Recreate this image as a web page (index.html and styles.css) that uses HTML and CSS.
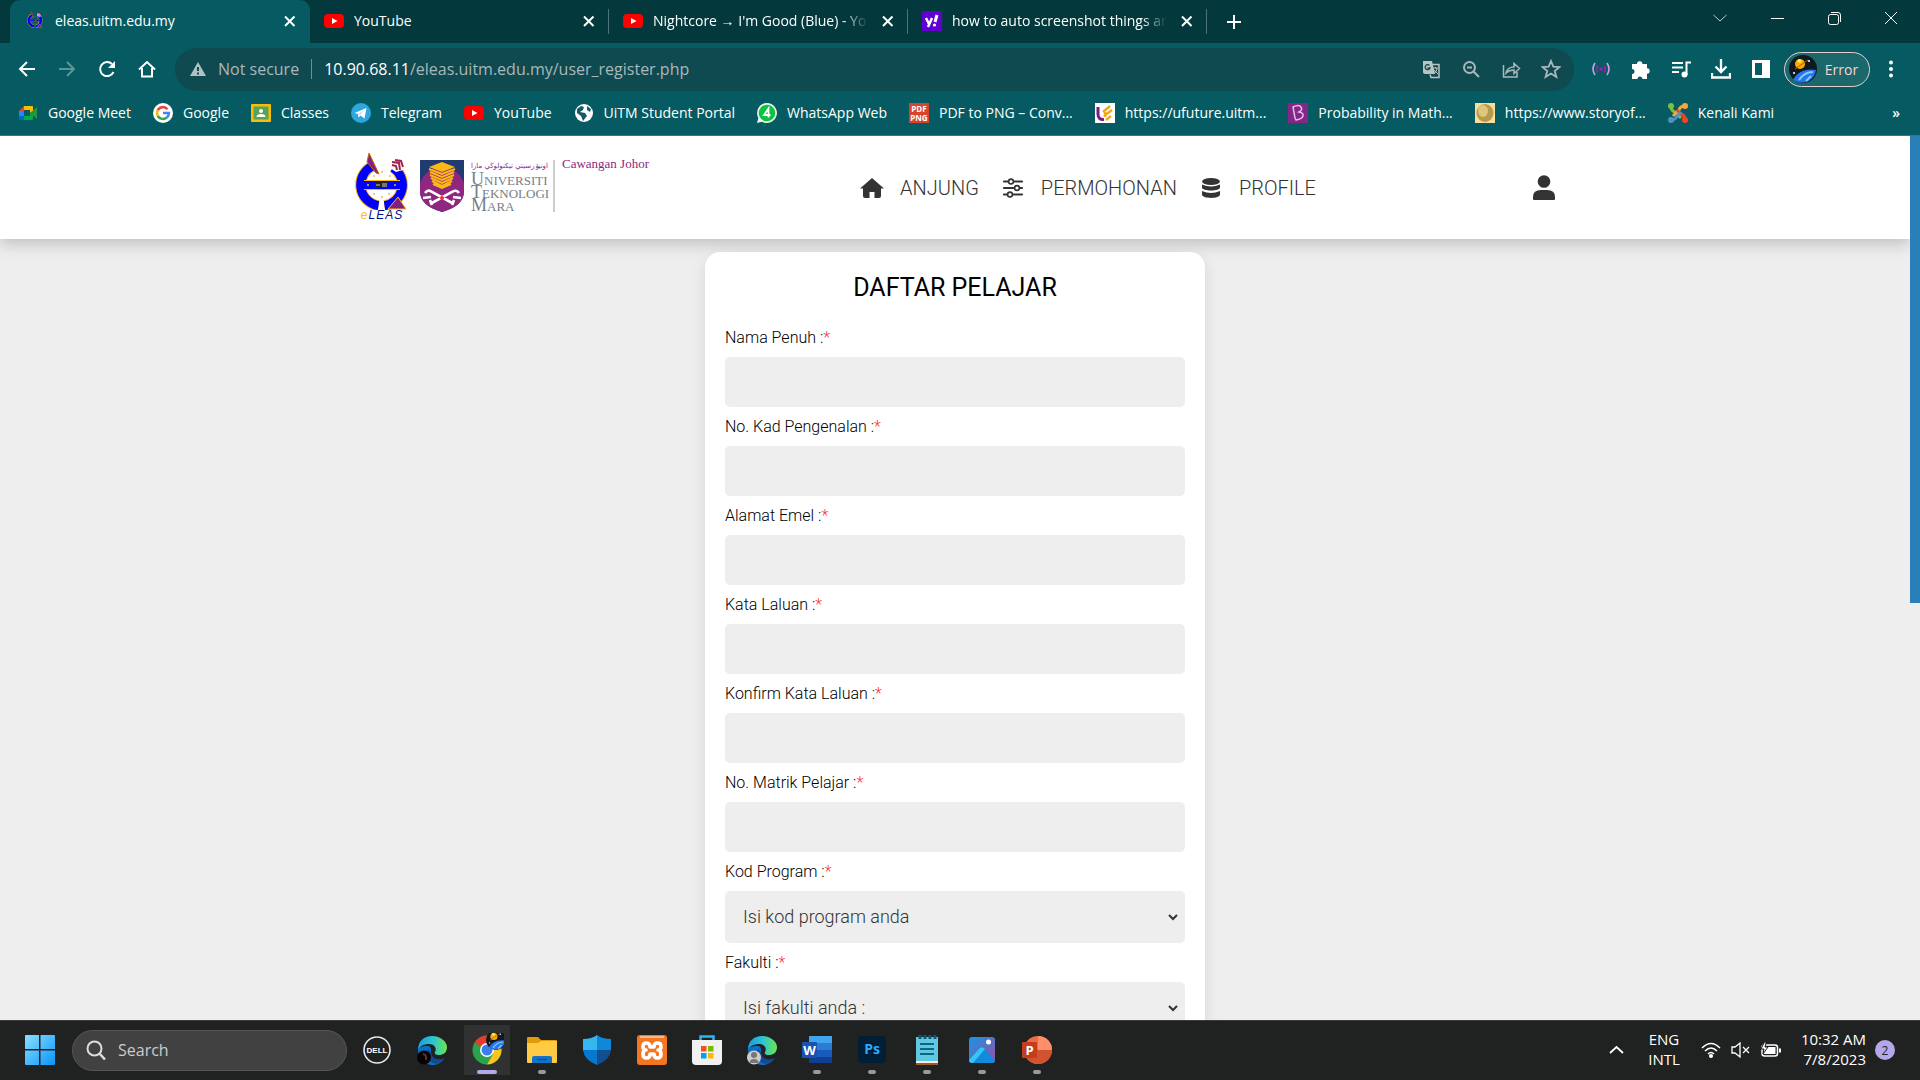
FILE: index.html
```html
<!DOCTYPE html>
<html lang="ms">
<head>
<meta charset="utf-8">
<title>eleas.uitm.edu.my</title>
<link rel="stylesheet" href="styles.css">
</head>
<body>
<svg class="defs" width="0" height="0" aria-hidden="true">
  <defs>
    <symbol id="i-close" viewBox="0 0 20 20"><path d="M5 5.500l9.500 9.500M14.500 5.500L5 15" stroke="currentColor" stroke-width="2" fill="none"/></symbol>
    <symbol id="i-yt" viewBox="0 0 20 20"><rect y="3" width="20" height="14" rx="4" fill="#f00"/><path d="M8 7l5.500 3L8 13z" fill="#fff"/></symbol>
    <symbol id="i-eleas" viewBox="0 0 54 70">
      <g fill="none" stroke="#fb1" stroke-width="11"><path d="M19 13.400A21 21 0 0 0 23.500 53.700"/><path d="M29.500 53.700A21 21 0 0 0 38 15.400"/></g>
      <g fill="none" stroke="#00f" stroke-width="9"><path d="M19 13.400A21 21 0 0 0 23.500 53.700"/><path d="M29.500 53.700A21 21 0 0 0 38 15.400"/></g>
      <rect x="9" y="28" width="36" height="10" fill="#fb1"/><rect x="6" y="29" width="42" height="8" fill="#00f"/>
      <rect x="20" y="30" width="13" height="6" fill="#222"/><path d="M21 33h4M27 32h5M27 34h5" stroke="#ccc"/>
      <circle cx="13" cy="33" r="1" fill="#fb1"/><circle cx="40" cy="33" r="1" fill="#fb1"/>
      <path d="M14 1l10 21-3-1L12 10z" fill="#802080" stroke="#c60"/><path d="M35 9l9-1 4 10-7 2-6-4z" fill="#fff"/>
      <path d="M37 10l7 1 1 7M37 13l4 1 1 4M40 8l6 1 2 6" fill="none" stroke="#a02050" stroke-width="2"/>
      <path d="M33 57l10-12 8 12z" fill="#802080" stroke="#fb1"/>
      <g fill="#db6"><circle cx="19" cy="24" r="1"/><circle cx="27" cy="20" r="1"/><circle cx="35" cy="24" r="1"/><circle cx="19" cy="42" r="1"/><circle cx="27" cy="45" r="1"/><circle cx="34" cy="42" r="1"/></g>
    </symbol>
    <symbol id="i-space" viewBox="0 0 28 28"><circle cx="14" cy="14" r="14" fill="#101820"/><path d="M4 25C8 17 17 13 27 15A14 14 0 0 1 9 27z" fill="#2277ee"/><path d="M10 25c4-6 8-8 14-8M17 26l5-5" stroke="#8cc4ff" stroke-width="2" fill="none"/><circle cx="11" cy="9" r="5" fill="#fa0"/><path d="M6 14l13-9" stroke="#a60"/><path d="M9 5l3 2" stroke="#fe5" stroke-width="3"/><circle cx="20" cy="6" r="1" fill="#fff"/><circle cx="5" cy="18" r="1" fill="#fff"/></symbol>
    <linearGradient id="g-edge" x1="0" y1="0" x2="1" y2="0"><stop offset="0" stop-color="#1b9de2"/><stop offset=".5" stop-color="#2cc3d4"/><stop offset="1" stop-color="#6be64c"/></linearGradient>
    <linearGradient id="g-win" x1="0" y1="0" x2="1" y2="1"><stop offset="0" stop-color="#8be0ff"/><stop offset="1" stop-color="#0a94fb"/></linearGradient>
    <linearGradient id="g-photo" x1="0" y1="0" x2="1" y2="1"><stop offset="0" stop-color="#1595e8"/><stop offset="1" stop-color="#9a4ea5"/></linearGradient>
    <symbol id="i-edge" viewBox="0 0 30 30">
      <path d="M1 15A14 14 0 0 0 15 30c5 0 9-2 12-6-7 3-14-1-13-8 0-3 0-5-4-5C5 11 1 13 1 15z" fill="#0c70c6"/>
      <path d="M11 14c-3 5 0 14 8 15 4-1 7-3 9-6-8 3-14 0-14-6z" fill="#114a93"/>
      <path d="M1 15C1 6 7 1 15 1c9 0 15 6 15 11 0 6-4 8-8 8-3 0-5-1-4-3 2-3 0-8-6-8-5 0-9 2-11 6z" fill="url(#g-edge)"/>
    </symbol>
  </defs>
</svg>

<header class="browser">
  <div class="tabstrip">
    <nav class="tabs" aria-label="Tabs">
      <div class="tab tab-active"><svg class="ic20"><use href="#i-eleas"/></svg><span class="tab-title">eleas.uitm.edu.my</span><button class="tab-close" aria-label="Close tab"><svg class="ic20"><use href="#i-close"/></svg></button></div>
      <div class="tab"><svg class="ic20"><use href="#i-yt"/></svg><span class="tab-title">YouTube</span><button class="tab-close" aria-label="Close tab"><svg class="ic20"><use href="#i-close"/></svg></button></div>
      <div class="tab"><svg class="ic20"><use href="#i-yt"/></svg><span class="tab-title tab-fade">Nightcore → I'm Good (Blue) - Yo</span><button class="tab-close" aria-label="Close tab"><svg class="ic20"><use href="#i-close"/></svg></button></div>
      <div class="tab"><svg class="ic20" viewBox="0 0 20 20"><rect width="20" height="20" fill="#6001d2"/><path d="M4 7l3 6M10 7l-4 9" stroke="#fff" stroke-width="2.500"/><path d="M15 4l-2 7" stroke="#fff" stroke-width="3"/><circle cx="12.500" cy="14" r="1.600" fill="#fff"/></svg><span class="tab-title tab-fade">how to auto screenshot things an</span><button class="tab-close" aria-label="Close tab"><svg class="ic20"><use href="#i-close"/></svg></button></div>
      <button class="newtab" aria-label="New tab"><svg class="ic20" viewBox="0 0 20 20"><path d="M10 3v14M3 10h14" stroke="currentColor" stroke-width="2"/></svg></button>
    </nav>
    <div class="winctl">
      <button aria-label="Search tabs"><svg class="ic20" viewBox="0 0 20 20"><path d="M3.500 7l6.500 6 6.500-6" fill="none" stroke="#b6cdcf"/></svg></button>
      <button aria-label="Minimize"><svg class="ic20" viewBox="0 0 20 20"><path d="M4 10.500h13" stroke="#fff"/></svg></button>
      <button aria-label="Restore"><svg class="ic20" viewBox="0 0 20 20"><rect x="4.500" y="6.500" width="10" height="10" rx="2" fill="none" stroke="#fff"/><path d="M7 4.500h7q2.500 0 2.500 2.500v7" fill="none" stroke="#fff"/></svg></button>
      <button aria-label="Close"><svg class="ic20" viewBox="0 0 20 20"><path d="M4 4l12 12M16 4L4 16" stroke="#fff"/></svg></button>
    </div>
  </div>

  <div class="toolbar">
    <div class="navbtns">
      <button aria-label="Back"><svg class="ic20" viewBox="0 0 20 20"><path d="M18 10H3M10 3l-7 7 7 7" fill="none" stroke="currentColor" stroke-width="2"/></svg></button>
      <button aria-label="Forward" class="dim"><svg class="ic20" viewBox="0 0 20 20"><path d="M2 10h15M10 3l7 7-7 7" fill="none" stroke="currentColor" stroke-width="2"/></svg></button>
      <button aria-label="Reload"><svg class="ic20" viewBox="0 0 20 20"><path d="M16.500 13A7 7 0 1 1 15 5" fill="none" stroke="currentColor" stroke-width="2"/><path d="M18 2v7h-7z" fill="currentColor"/></svg></button>
      <button aria-label="Home"><svg class="ic20" viewBox="0 0 20 20"><path d="M2 10.500L10 3l8 7.500M5 9v8.500h10V9" fill="none" stroke="currentColor" stroke-width="2"/></svg></button>
    </div>
    <div class="omnibox">
      <svg class="ic16" viewBox="0 0 16 16"><path d="M8 1l8 14H0z" fill="#b3c0c2"/><path d="M8 6v4M8 11.500v2" stroke="#0f4a50" stroke-width="2"/></svg>
      <span class="notsecure">Not secure</span><span class="omni-sep"></span>
      <label class="host" for="url">10.90.68.11</label><input id="url" class="url" value="/eleas.uitm.edu.my/user_register.php">
      <div class="omni-actions">
        <button aria-label="Translate"><svg class="ic20" viewBox="0 0 20 20"><path d="M2 2h9l3 13H4q-2 0-2-2z" fill="#b9c3c4"/><path d="M10 5.500h8v13h-8l-1-3" fill="none" stroke="#b9c3c4" stroke-width="1.500"/><path d="M12 9h5M14.500 8v1M16 9c0 3-2 5-4 6M13 11l4 4" stroke="#b9c3c4" fill="none"/><path d="M8.500 6.500A2.500 2.500 0 1 0 9 9H6.500" fill="none" stroke="#0f4a50" stroke-width="1.300"/></svg></button>
        <button aria-label="Zoom"><svg class="ic20" viewBox="0 0 20 20"><circle cx="8.500" cy="8.500" r="5.500" fill="none" stroke="currentColor" stroke-width="2"/><path d="M12.500 12.500L18 18M6 8.500h5" stroke="currentColor" stroke-width="2"/></svg></button>
        <button aria-label="Share"><svg class="ic20" viewBox="0 0 20 20"><path d="M2.500 6v12H16v-5M5 14c1-4 4-6 8-6V4.500l5.500 5-5.500 5V11c-4 0-6 1-8 3z" fill="none" stroke="currentColor" stroke-width="1.500"/></svg></button>
        <button aria-label="Bookmark"><svg class="ic20" viewBox="0 0 20 20"><path d="M10 2l2.300 5.700 6.200.3-4.800 4 1.700 6-5.400-3.400L4.600 18l1.700-6-4.800-4 6.200-.3z" fill="none" stroke="currentColor" stroke-width="1.800"/></svg></button>
      </div>
    </div>
    <div class="extbtns">
      <button aria-label="Recorder"><svg class="ic20" viewBox="0 0 20 20" fill="none" stroke="#c9a3d9" stroke-width="1.600"><circle cx="10" cy="10" r="1.800" fill="#a21caf" stroke="none"/><path d="M7 6.500q-2.500 3.500 0 7M13 6.500q2.500 3.500 0 7" stroke="#a21caf"/><path d="M4 4q-4 6 0 12M16 4q4 6 0 12"/></svg></button>
      <button aria-label="Extensions"><svg class="ic20" viewBox="0 0 20 20"><path d="M1 5h5a2.700 2.700 0 1 1 5.400 0H16v4.300a2.700 2.700 0 1 1 0 5.400V20h-4.500a2.500 2.500 0 0 0-5 0H1v-5a2.500 2.500 0 0 0 0-5z" fill="#fff"/></svg></button>
      <button aria-label="Media"><svg class="ic20" viewBox="0 0 20 20"><path d="M1 4h11M1 8.500h11M1 13h7M15.500 16V3.500H20" stroke="#fff" stroke-width="2" fill="none"/><circle cx="13.500" cy="15.500" r="3" fill="#fff"/></svg></button>
      <button aria-label="Downloads"><svg class="ic20" viewBox="0 0 20 20"><path d="M10 0v12M4.500 7.500l5.500 5.500 5.500-5.500M1 14v4.500h18V14" stroke="#fff" stroke-width="2.300" fill="none"/></svg></button>
      <button aria-label="Side panel"><svg class="ic20" viewBox="0 0 20 20"><path d="M1 1h18v18H1zM4 4v12h7V4z" fill="#fff" fill-rule="evenodd"/></svg></button>
    </div>
    <button class="profile-pill"><svg class="ic28"><use href="#i-space"/></svg><span>Error</span></button>
    <button class="kebab" aria-label="Menu"><svg class="ic20" viewBox="0 0 20 20" fill="#fff"><circle cx="10" cy="3.500" r="2"/><circle cx="10" cy="10" r="2"/><circle cx="10" cy="16.500" r="2"/></svg></button>
  </div>

  <nav class="bookmarks" aria-label="Bookmarks">
    <a href="#"><svg class="ic20" viewBox="0 0 20 20"><path d="M1 8l5-5v5z" fill="#ea4335"/><path d="M6 3h8q1 0 1 1v4l-3 2V7H6z" fill="#fbbc04"/><path d="M1 8h5v5H1z" fill="#2684fc"/><path d="M1 13h5v4H2q-1 0-1-1z" fill="#0066da"/><path d="M6 13h6v-3l3 2v4q0 1-1 1H6z" fill="#00ac47"/><path d="M12 10l7-6v12z" fill="#22963f"/></svg><span>Google Meet</span></a>
    <a href="#"><svg class="ic20" viewBox="0 0 20 20"><circle cx="10" cy="10" r="10" fill="#fff"/><g fill="none" stroke-width="2.500"><path d="M14.500 6.200A6 6 0 0 0 4.700 7.200" stroke="#ea4335"/><path d="M4.700 7.200a6 6 0 0 0 0 5.600" stroke="#fbbc04"/><path d="M4.700 12.800a6 6 0 0 0 9.200 1.700" stroke="#34a853"/><path d="M13.900 14.500q2-2 2-4.500H10" stroke="#4285f4"/></g></svg><span>Google</span></a>
    <a href="#"><svg class="ic20" viewBox="0 0 20 20"><rect y="1" width="20" height="18" rx="1" fill="#fbbc04"/><rect x="2.500" y="3.500" width="15" height="13" fill="#57a35b"/><circle cx="10" cy="8" r="2" fill="#fff"/><path d="M5.500 14q0-3 4.500-3t4.500 3z" fill="#fff"/></svg><span>Classes</span></a>
    <a href="#"><svg class="ic20" viewBox="0 0 20 20"><circle cx="10" cy="10" r="10" fill="#2ea6de"/><path d="M3.500 10L15.500 5l-2 10.500-4-3-2 2-.5-3.500z" fill="#fff"/><path d="M7.500 11L13 7l-4 5" fill="#b8dcf0"/></svg><span>Telegram</span></a>
    <a href="#"><svg class="ic20"><use href="#i-yt"/></svg><span>YouTube</span></a>
    <a href="#"><svg class="ic20" viewBox="0 0 20 20"><circle cx="10" cy="10" r="9" fill="#fff"/><path d="M3 6l4-3 3 1-1 3-3 2 5 1 2 3-4 5-2-5-4-3zM13 3l4 3-1 3-3-2z" fill="#125e64"/></svg><span>UiTM Student Portal</span></a>
    <a href="#"><svg class="ic20" viewBox="0 0 20 20"><path d="M10 0a10 10 0 1 1-5 18.700L0 20l1.400-5A10 10 0 0 1 10 0z" fill="#e8f5ec"/><circle cx="10" cy="10" r="8.300" fill="#0dc143"/><path d="M11.500 14.500v-9l-4.500 6.500h6.500" fill="none" stroke="#fff" stroke-width="1.800"/></svg><span>WhatsApp Web</span></a>
    <a href="#"><svg class="ic20" viewBox="0 0 20 20"><rect width="20" height="20" fill="#d8432e"/><text x="10" y="9" class="ico-pdf">PDF</text><text x="10" y="18" class="ico-pdf">PNG</text></svg><span>PDF to PNG – Conv...</span></a>
    <a href="#"><svg class="ic20" viewBox="0 0 20 20"><rect width="20" height="20" fill="#fff"/><path d="M3 4v7q0 6 6 5.500" fill="none" stroke="#7a1c82" stroke-width="3"/><path d="M8 9l7-6M9 13l8-6M11 17l5-4M10 9v5" stroke="#f3a81c" stroke-width="2.400"/></svg><span>https://ufuture.uitm...</span></a>
    <a href="#"><svg class="ic20" viewBox="0 0 20 20"><rect width="20" height="20" fill="#84268a"/><path d="M5 4q6-3 8 0t-2 5q5 1 4 4t-7 4l-1-2z" fill="none" stroke="#e3c0e6" stroke-width="1.500"/></svg><span>Probability in Math...</span></a>
    <a href="#"><svg class="ic20" viewBox="0 0 20 20"><rect width="20" height="20" fill="#fbdc9b"/><ellipse cx="10" cy="10" rx="8.500" ry="9" fill="#b39a4e"/><ellipse cx="8" cy="8" rx="5" ry="6" fill="#dcc878"/></svg><span>https://www.storyof...</span></a>
    <a href="#"><svg class="ic20" viewBox="0 0 20 20" fill="none" stroke-width="3" stroke-linejoin="round"><path d="M3 3q0 5 4 6l6 6" stroke="#7ac143"/><path d="M17 3q-5 0-6 4l-6 6" stroke="#f9a541"/><path d="M17 17q0-5-4-6L9 7" stroke="#f44321"/><path d="M3 17q5 0 6-4l4-4" stroke="#5091cd"/><g stroke="none"><circle cx="3" cy="3" r="3" fill="#7ac143"/><circle cx="17" cy="3" r="3" fill="#f9a541"/><circle cx="17" cy="17" r="3" fill="#f44321"/><circle cx="3" cy="17" r="3" fill="#5091cd"/></g></svg><span>Kenali Kami</span></a>
    <button class="more" aria-label="More bookmarks">»</button>
  </nav>
</header>

<div class="viewport">
  <div class="page">
    <header class="site-header">
      <div class="site-inner">
        <a class="brand" href="#">
          <span class="eleas"><svg class="eleas-mark" viewBox="0 0 54 58"><use href="#i-eleas" width="54" height="70"/></svg><span class="eleas-name"><b>e</b>LEAS</span></span>
          <svg class="shield" viewBox="0 0 44 52">
            <clipPath id="sh"><path d="M0 0h44v31q0 15-22 21Q0 46 0 31z"/></clipPath>
            <g clip-path="url(#sh)"><rect width="44" height="52" fill="#213a70"/><circle cx="22" cy="30" r="23" fill="#8f2680"/></g>
            <path d="M9 7l13-5 13 5-13 5z" fill="#fdb913"/>
            <g fill="none" stroke="#fdb913" stroke-width="2"><path d="M9 9l13 5 13-5M10 12l12 5 12-5M10 15l12 5 12-5M11 18l11 5 11-5M12 21l10 5 10-5M13 24l9 4 9-4"/></g>
            <path d="M5 33q3-4 7-1l22 12M39 33q-3-4-7-1L10 44M3 38l8-1M41 38l-8-1M12 45l-2-5M32 45l2-5" fill="none" stroke="#fff" stroke-width="2.600"/>
            <circle cx="22" cy="38" r="2" fill="#ee3124"/>
          </svg>
          <span class="uitm"><span class="jawi" lang="ms-Arab">اونيۏرسيتي تيكنولوڬي مارا</span><span class="uni">Universiti</span><span class="uni">Teknologi</span><span class="uni">Mara</span></span>
          <span class="branch">Cawangan Johor</span>
        </a>
        <nav class="menu">
          <a href="#"><svg class="ic24" viewBox="0 0 24 24"><path d="M12 2L0 12.500h3V20q0 2 2 2h4.500v-6h5v6H19q2 0 2-2v-7.500h3z" fill="#333"/></svg><span>ANJUNG</span></a>
          <a href="#"><svg class="ic24" viewBox="0 0 24 24"><path d="M3 5.500h18M3 12h18M3 18.500h18" stroke="#333" stroke-width="2.200" stroke-linecap="round"/><g fill="#fff" stroke="#333" stroke-width="1.600"><circle cx="10" cy="5.500" r="2.400"/><circle cx="16" cy="12" r="2.400"/><circle cx="9" cy="18.500" r="2.400"/></g></svg><span>PERMOHONAN</span></a>
          <a href="#"><svg class="ic24" viewBox="0 0 24 24" fill="#333"><ellipse cx="12" cy="5.500" rx="9" ry="3.500"/><path d="M3 8.500q9 4 18 0v3c0 4-18 4-18 0zM3 15q9 4 18 0v3.500c0 4.500-18 4.500-18 0z"/></svg><span>PROFILE</span></a>
        </nav>
        <a class="user" href="#" aria-label="User"><svg class="usericon" viewBox="0 0 22 25" fill="#333"><circle cx="11" cy="6.500" r="6.300"/><path d="M0 24v-2q0-7 8-7h6q8 0 8 7v2q0 1-1 1H1q-1 0-1-1z"/></svg></a>
      </div>
    </header>

    <form class="card">
      <h1>DAFTAR PELAJAR</h1>
      <label for="f1">Nama Penuh :<i>*</i></label><input id="f1" type="text">
      <label for="f2">No. Kad Pengenalan :<i>*</i></label><input id="f2" type="text">
      <label for="f3">Alamat Emel :<i>*</i></label><input id="f3" type="email">
      <label for="f4">Kata Laluan :<i>*</i></label><input id="f4" type="password">
      <label for="f5">Konfirm Kata Laluan :<i>*</i></label><input id="f5" type="password">
      <label for="f6">No. Matrik Pelajar :<i>*</i></label><input id="f6" type="text">
      <label for="f7">Kod Program :<i>*</i></label><select id="f7"><option>Isi kod program anda</option></select>
      <label for="f8">Fakulti :<i>*</i></label><select id="f8"><option>Isi fakulti anda :</option></select>
    </form>
  </div>
  <div class="scrollbar"><div class="thumb"></div></div>
</div>

<footer class="taskbar">
  <div class="task-left">
    <button class="start" aria-label="Start"><svg class="ic30" viewBox="0 0 30 30" fill="url(#g-win)"><path d="M1 0h13v14H0V1q0-1 1-1zM15.500 0H29q1 0 1 1v13H15.500zM0 15.500h14V30H1q-1 0-1-1zM15.500 15.500H30V29q0 1-1 1H15.500z"/></svg></button>
    <div class="search"><svg class="ic20" viewBox="0 0 20 20"><circle cx="8.500" cy="8.500" r="7" fill="none" stroke="#ddd" stroke-width="2"/><path d="M13.500 13.500l5.500 6" stroke="#ddd" stroke-width="2.500"/></svg><input type="search" placeholder="Search" aria-label="Search"></div>
    <div class="apps">
      <button aria-label="Dell"><svg class="ic30" viewBox="0 0 30 30"><circle cx="15" cy="15" r="13" fill="none" stroke="#e8e8e8" stroke-width="1.600"/><text x="15" y="18" class="ico-dell">DELL</text></svg></button>
      <button aria-label="Edge"><svg class="ic30" viewBox="0 0 30 30"><use href="#i-edge"/><circle cx="7" cy="22.500" r="7" fill="#080405"/><path d="M6 19q4 1 3 6" stroke="#6b3023" stroke-width="2" fill="none"/></svg></button>
      <button aria-label="Chrome" class="app-on"><svg class="ic34" viewBox="0 0 34 34"><g transform="translate(2)"><circle cx="15" cy="17" r="14.500" fill="#2ba24c"/><path d="M15 17L2.500 9.700A14.500 14.500 0 0 1 27.500 9.700z" fill="#e33b2e"/><path d="M15 10h12.700A14.500 14.500 0 0 1 15 31.500l6.500-11z" fill="#fcc31e"/><circle cx="15" cy="17" r="7" fill="#fff"/><circle cx="15" cy="17" r="5.500" fill="#3b7ded"/></g><use href="#i-space" x="16" y="-3" width="20" height="20"/></svg></button>
      <button aria-label="File Explorer" class="app-run"><svg class="ic30" viewBox="0 0 30 30"><path d="M0 3q0-1 1-1h10l3 3h15q1 0 1 1v6H0z" fill="#e09b08"/><path d="M0 8h11l3-2h16v21q0 1-1 1H1q-1 0-1-1z" fill="#ffcb45"/><path d="M5 28v-5q0-2 2-2h16q2 0 2 2v5z" fill="#1374c7"/><path d="M10 24.500h10" stroke="#07579f" stroke-width="1.500"/></svg></button>
      <button aria-label="Security"><svg class="ic30" viewBox="0 0 30 30"><path d="M15 0q5 4 14 4v11H15z" fill="#0f88d8"/><path d="M15 0Q10 4 1 4v11h14z" fill="#36b5ef"/><path d="M1 15q1 10 14 15V15z" fill="#0877d0"/><path d="M29 15q-1 10-14 15V15z" fill="#124f91"/></svg></button>
      <button aria-label="XAMPP"><svg class="ic30" viewBox="0 0 30 30"><rect width="30" height="30" rx="3" fill="#f37623"/><path d="M3 2h24" stroke="#f9b88b" stroke-width="2"/><path d="M13 12q0-4-3.500-4T6 11.500 9 15q-3 0-3 4t3.500 4 3.500-4h4q0 4 3.500 4t3.500-4-3-4q3 0 3-3.500T20.500 8 17 12z" fill="none" stroke="#fff" stroke-width="3.600" stroke-linejoin="round"/></svg></button>
      <button aria-label="Store"><svg class="ic30" viewBox="0 0 30 30"><path d="M8.500 6V1.500h13V6" fill="none" stroke="#29b6f2" stroke-width="2.500"/><path d="M0 5h30v21q0 4-4 4H4q-4 0-4-4z" fill="#f1f1f1"/><path d="M9 11h5.500v5.500H9z" fill="#f04e23"/><path d="M16 11h5.500v5.500H16z" fill="#7eb900"/><path d="M9 18h5.500v5.500H9z" fill="#00a3ee"/><path d="M16 18h5.500v5.500H16z" fill="#ffb800"/></svg></button>
      <button aria-label="Edge profile"><svg class="ic30" viewBox="0 0 30 30"><use href="#i-edge"/><circle cx="7" cy="22.500" r="7" fill="#cfcbc8"/><circle cx="7" cy="20" r="3" fill="#777"/><path d="M2.500 28q0-4 4.500-4t4.500 4z" fill="#777"/></svg></button>
      <button aria-label="Word" class="app-run"><svg class="ic30" viewBox="0 0 30 30"><path d="M7 1h23v7H7z" fill="#41a5ee"/><path d="M7 8h23v7H7z" fill="#2b7cd3"/><path d="M7 15h23v7H7z" fill="#185abd"/><path d="M7 22h23v6H7z" fill="#103f91"/><rect y="7" width="15" height="16" rx="1" fill="#1853b3"/><text x="7.500" y="20" class="ico-b">W</text></svg></button>
      <button aria-label="Photoshop" class="app-run"><svg class="ic30" viewBox="0 0 30 30"><rect x="1" y="1" width="28" height="27" rx="4" fill="#001e36"/><text x="15" y="19" class="ico-ps">Ps</text></svg></button>
      <button aria-label="Notepad" class="app-run"><svg class="ic30" viewBox="0 0 30 30"><path d="M4 27h22v3H4z" fill="#a7591c"/><path d="M4 24h22v4H4z" fill="#eee"/><path d="M4 2h22v24H4z" fill="#62c8e0"/><path d="M8 9h14M8 14h14M8 19h14" stroke="#0b6784" stroke-width="2"/><path d="M8 0v4M13 0v4M18 0v4M23 0v4" stroke="#0b5a75" stroke-width="3"/></svg></button>
      <button aria-label="Photos" class="app-run"><svg class="ic30" viewBox="0 0 30 30"><rect x="2" y="2" width="26" height="26" rx="3" fill="url(#g-photo)"/><path d="M2 25l11-12q2-2 4 0l11 12q0 3-3 3H5q-3 0-3-3z" fill="#1489de"/><path d="M2 25l11-12q2-2 5 1L6 28q-4 0-4-3z" fill="#36c5f4"/><circle cx="21.500" cy="7" r="2.500" fill="#fff"/></svg></button>
      <button aria-label="PowerPoint" class="app-run"><svg class="ic30" viewBox="0 0 30 30"><circle cx="16" cy="15" r="14" fill="#ed6c47"/><path d="M16 1a14 14 0 0 1 14 14H16z" fill="#ff8f6b"/><path d="M2 15h28a14 14 0 0 1-28 0z" fill="#d35230"/><rect y="7" width="15" height="16" rx="1" fill="#c43e1c"/><text x="7.500" y="20" class="ico-b">P</text></svg></button>
    </div>
  </div>
  <div class="tray">
    <button class="tray-up" aria-label="Show hidden icons"><svg class="ic20" viewBox="0 0 20 20"><path d="M4 13l6.500-6 6.500 6" fill="none" stroke="#fff" stroke-width="1.800"/></svg></button>
    <button class="lang"><span>ENG</span><span>INTL</span></button>
    <button class="status" aria-label="Status">
      <svg class="ic20" viewBox="0 0 20 20" fill="none" stroke="#fff" stroke-width="1.500"><path d="M1 8q9-9 18 0M4 11q6-6 12 0M7 14q3-3 6 0"/><circle cx="10" cy="16" r="1.300" fill="#fff"/></svg>
      <svg class="ic20" viewBox="0 0 20 20" fill="none" stroke="#fff" stroke-width="1.300"><path d="M1 7h3l5-4v14l-5-4H1zM12 7l6 6M18 7l-6 6"/></svg>
      <svg class="ic20" viewBox="0 0 20 20"><rect x="1" y="5" width="15.500" height="11" rx="2.500" fill="none" stroke="#fff" stroke-width="1.500"/><rect x="3" y="7" width="11.500" height="7" fill="#fff"/><path d="M18 8.500h2v4h-2z" fill="#fff"/><path d="M4 1L0 9h3l-1 5 5-7H4l1-4z" fill="#fff" stroke="#202020"/></svg>
    </button>
    <button class="clock"><span>10:32 AM</span><span>7/8/2023</span></button>
    <button class="badge">2</button>
  </div>
</footer>
</body>
</html>
```
FILE: styles.css
```css
*{box-sizing:border-box}
body{margin:0;height:100vh;display:flex;flex-direction:column;overflow:hidden;font-family:"Open Sans","Noto Sans",sans-serif;font-size:14px;background:#eee}
button{background:none;border:0;padding:0;margin:0;color:inherit;font:inherit;display:flex;align-items:center;justify-content:center}
a{color:inherit;text-decoration:none}
input,select{border:0;outline:0;margin:0;padding:0;background:none;font:inherit}
svg{display:block;flex:none}
.defs{position:absolute}
.ic16{width:16px;height:16px}
.ic20{width:20px;height:20px}
.ic24{width:24px;height:24px}
.ic28{width:28px;height:28px}
.ic30{width:30px;height:30px}
.ic34{width:34px;height:34px}

/* browser */
.browser{background:#055b61;color:#fff;flex:none;border-bottom:1px solid #2c7b81}
.tabstrip{display:flex;justify-content:space-between;background:#03393d;height:43px}
.tabs{display:flex;padding-left:10px}
.tab{display:flex;align-items:center;width:299px;gap:10px;padding:0 10px 1px 14px;background:linear-gradient(#4b7477,#4b7477) right center/1px 25px no-repeat}
.tab-active{width:300px;padding-left:15px;background:#055b61;border-radius:10px 10px 0 0}
.tab-title{flex:1;min-width:0;overflow:hidden;white-space:nowrap;line-height:20px}
.tab-fade{-webkit-mask-image:linear-gradient(90deg,#000 88%,transparent);mask-image:linear-gradient(90deg,#000 88%,transparent)}
.newtab{width:54px}
.winctl{display:flex;align-items:center;height:36px;padding-right:1px}
.winctl button{width:57px}
.toolbar{display:flex;align-items:center;height:52px;padding-right:8px}
.navbtns{display:flex;gap:20px;padding:0 18px 0 17px}
.dim{color:#5d9599}
.omnibox{flex:1;display:flex;align-items:center;height:43px;background:#0f4a50;border-radius:22px;padding:0 13px 0 15px;font-size:16px;color:#a9b8ba}
.notsecure{padding:0 12px}
.omni-sep{width:1px;height:20px;background:#6f9093;margin-right:12px}
.host{color:#fff}
.url{flex:1;min-width:0;color:#a9b8ba}
.omni-actions,.extbtns{display:flex;gap:20px}
.extbtns{padding:0 13px 0 17px}
.profile-pill{height:35px;width:86px;gap:8px;padding:0 11px 0 4px;border:1px solid #e8cfcf;border-radius:18px;background:#1a676c;color:#fbd5d0}
.kebab{width:42px}
.bookmarks{display:flex;align-items:center;height:40px;padding:0 20px 5px 18px;gap:22px;white-space:nowrap}
.bookmarks a{display:flex;align-items:center;gap:10px}
.more{margin-left:auto;font-weight:600}
.ico-pdf{font:700 8px "Open Sans",sans-serif;fill:#fff;text-anchor:middle}

/* site */
.viewport{flex:1;min-height:0;display:flex}
.page{flex:1;min-width:0;overflow:hidden;font-family:Roboto,sans-serif;font-weight:300;background:#eee}
.scrollbar{width:10px;background:#eee;flex:none}
.thumb{height:52.8%;background:#2980b9}
.site-header{background:#fff;box-shadow:0 5px 15px rgba(0,0,0,.2);height:103px;display:flex;justify-content:center}
.site-inner{width:100%;max-width:1200px;display:flex;justify-content:space-between;align-items:center}
.brand{display:flex;align-items:center;padding-bottom:3px}
.eleas{display:flex;flex-direction:column;width:54px}
.eleas-mark{width:54px;height:58px;overflow:hidden}
.eleas-name{font:italic 12px/10px "Liberation Sans",sans-serif;letter-spacing:1px;color:#00118f;text-align:center}
.eleas-name b{color:#fb1;font-weight:400}
.shield{width:44px;height:52px;margin:0 7px 0 11px}
.uitm{display:flex;flex-direction:column;width:84px;height:52px;border-right:2px solid #ccc}
.jawi{font:7px/13px "DejaVu Sans",sans-serif;color:#8f2680;white-space:nowrap}
.uni{font:small-caps 18px/13px "Liberation Serif",serif;color:#75808a}
.branch{font:13px/16px "Liberation Serif",serif;color:#8f2680;align-self:flex-start;padding:4px 0 0 7px}
.menu{display:flex;gap:22px;margin-right:6px;font-size:20px;color:#333}
.menu a{display:flex;align-items:center;gap:16px}
.usericon{width:22px;height:25px}
.card{width:500px;max-width:100%;margin:13px auto 40px;padding:20px;background:#fff;border-radius:15px;box-shadow:0 5px 15px rgba(0,0,0,.1);display:flex;flex-direction:column}
h1{margin:0 0 19px;font-size:25px;line-height:32px;font-weight:400;text-align:center}
.card label{font-size:16px;line-height:19px;margin:5px 0 10px;color:#000}
.card i{font-style:normal;color:#f33}
.card input,.card select{width:100%;height:50px;margin-bottom:5px;padding:0 15px;background:#eee;border-radius:5px;font-size:18px;color:#333}
.card select{height:52px;padding:0 18px 2px;appearance:none;background:#eee url("data:image/svg+xml,%3Csvg xmlns='http://www.w3.org/2000/svg' width='10' height='8'%3E%3Cpath d='M1 2l4 4 4-4' fill='none' stroke='%23333' stroke-width='2'/%3E%3C/svg%3E") right 7px center no-repeat}

/* taskbar */
.taskbar{flex:none;height:60px;background:#202222;border-top:1px solid #3a3c3c;display:flex;justify-content:space-between;align-items:center;padding-bottom:1px;color:#fff}
.task-left,.apps,.tray{display:flex;align-items:center}
.start{width:72px;padding-left:8px}
.search{display:flex;align-items:center;gap:12px;width:275px;height:41px;border-radius:21px;padding:0 13px;background:#414141;border:1px solid #565656}
.search input{flex:1;min-width:0;font-size:16px}
.search input::placeholder{color:#ccc;opacity:1}
.apps{padding-left:3px;gap:1px}
.apps button{width:54px;height:58px;position:relative}
.app-on{background:linear-gradient(#303232,#303232) center/46px 50px no-repeat}
.app-run::after,.app-on::after{content:"";position:absolute;bottom:5px;width:8px;height:4px;border-radius:2px;background:#999}
.app-on::after{width:20px;background:#b4a7ea}
.ico-dell{font:700 8px "Liberation Sans",sans-serif;fill:#fff;text-anchor:middle}
.ico-b{font:700 13px "Open Sans",sans-serif;fill:#fff;text-anchor:middle}
.ico-ps{font:700 14px "Open Sans",sans-serif;fill:#31a8ff;text-anchor:middle}
.tray{padding-right:25px;font-size:15px}
.tray-up{width:34px;margin-right:15px}
.lang,.clock{flex-direction:column;line-height:20px;padding-bottom:2px}
.lang{width:32px}
.status{gap:10px;padding:0 19px 0 21px}
.clock{align-items:flex-end;width:66px;white-space:nowrap}
.badge{width:20px;height:20px;border-radius:50%;background:#b4a7ea;color:#222;margin-left:9px;font-size:12px}
```
